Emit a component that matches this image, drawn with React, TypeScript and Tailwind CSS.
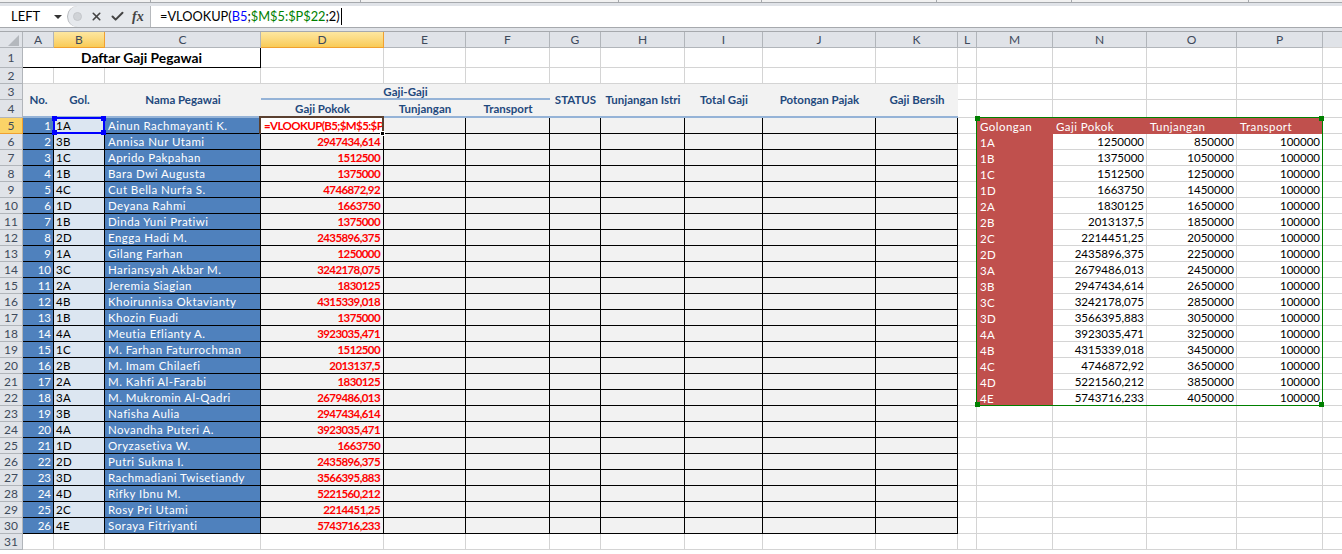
import React from "react";
import { X, Check } from "lucide-react";

const rows: [string, string, string][] = [
  ["1A", "Ainun Rachmayanti K.", ""],
  ["3B", "Annisa Nur Utami", "2947434,614"],
  ["1C", "Aprido Pakpahan", "1512500"],
  ["1B", "Bara Dwi Augusta", "1375000"],
  ["4C", "Cut Bella Nurfa S.", "4746872,92"],
  ["1D", "Deyana Rahmi", "1663750"],
  ["1B", "Dinda Yuni Pratiwi", "1375000"],
  ["2D", "Engga Hadi M.", "2435896,375"],
  ["1A", "Gilang Farhan", "1250000"],
  ["3C", "Hariansyah Akbar M.", "3242178,075"],
  ["2A", "Jeremia Siagian", "1830125"],
  ["4B", "Khoirunnisa Oktavianty", "4315339,018"],
  ["1B", "Khozin Fuadi", "1375000"],
  ["4A", "Meutia Eflianty A.", "3923035,471"],
  ["1C", "M. Farhan Faturrochman", "1512500"],
  ["2B", "M. Imam Chilaefi", "2013137,5"],
  ["2A", "M. Kahfi Al-Farabi", "1830125"],
  ["3A", "M. Mukromin Al-Qadri", "2679486,013"],
  ["3B", "Nafisha Aulia", "2947434,614"],
  ["4A", "Novandha Puteri A.", "3923035,471"],
  ["1D", "Oryzasetiva W.", "1663750"],
  ["2D", "Putri Sukma I.", "2435896,375"],
  ["3D", "Rachmadiani Twisetiandy", "3566395,883"],
  ["4D", "Rifky Ibnu M.", "5221560,212"],
  ["2C", "Rosy Pri Utami", "2214451,25"],
  ["4E", "Soraya Fitriyanti", "5743716,233"],
];

const lookup: [string, string, string, string][] = [
  ["1A", "1250000", "850000", "100000"],
  ["1B", "1375000", "1050000", "100000"],
  ["1C", "1512500", "1250000", "100000"],
  ["1D", "1663750", "1450000", "100000"],
  ["2A", "1830125", "1650000", "100000"],
  ["2B", "2013137,5", "1850000", "100000"],
  ["2C", "2214451,25", "2050000", "100000"],
  ["2D", "2435896,375", "2250000", "100000"],
  ["3A", "2679486,013", "2450000", "100000"],
  ["3B", "2947434,614", "2650000", "100000"],
  ["3C", "3242178,075", "2850000", "100000"],
  ["3D", "3566395,883", "3050000", "100000"],
  ["4A", "3923035,471", "3250000", "100000"],
  ["4B", "4315339,018", "3450000", "100000"],
  ["4C", "4746872,92", "3650000", "100000"],
  ["4D", "5221560,212", "3850000", "100000"],
  ["4E", "5743716,233", "4050000", "100000"],
];

const colLetters = ["A", "B", "C", "D", "E", "F", "G", "H", "I", "J", "K", "L", "M", "N", "O", "P"];
const grid = "border-r border-b border-[#d4d4d4]";
const hdr = "row-span-2 flex items-center justify-center border-b-2 border-[#95b3d7] bg-[#f2f2f2] font-bold text-[#1f497d] whitespace-nowrap text-[11.5px]";
const sub = "flex items-center justify-center border-b-2 border-[#95b3d7] bg-[#f2f2f2] pt-[2px] font-bold text-[#1f497d] text-[11.5px]";
const dark = "border-r border-b border-black";
const txt = "text-[11.5px] tracking-[0.45px]";
const num = "text-[11.5px]";
const redNum = "text-[11.5px] tracking-[-0.6px] font-bold text-[#ff0000]";
const red = "flex items-center bg-[#c0504d] pl-[3px] pt-[1px] text-white " + txt;

function RowHead({ n }: { n: number }) {
  return (
    <div
      className={
        n === 5
          ? "flex items-center justify-center border-r border-b border-[#f0a030] bg-[#fbd367] pt-[1px] text-[#3e4a5b]"
          : "flex items-center justify-center border-r border-b border-[#b1b5ba] bg-[#e0e3e8] pt-[1px] text-[#3e4a5b]"
      }
    >
      {n}
    </div>
  );
}

function Empty({ count }: { count: number }) {
  return (
    <>
      {Array.from({ length: count }).map((_, i) => (
        <div key={i} className={grid} />
      ))}
    </>
  );
}

function Handle({ className }: { className: string }) {
  return <div className={"absolute h-[5px] w-[5px] " + className} />;
}

export default function App() {
  return (
    <div className="h-[554px] w-[1342px] overflow-hidden bg-white font-['Lato','Liberation_Sans',sans-serif] text-[12px] leading-none text-black">
      <div className="flex h-[3px] border-b border-[#a6a9ad] bg-[#f1f1f1]">
        <div className="h-full w-[151px] border-r border-[#a6a9ad]" />
        <div className="h-full w-[210px] border-r border-[#a6a9ad]" />
        <div className="h-full w-[258px] border-r border-[#a6a9ad]" />
        <div className="h-full w-[143px] border-r border-[#a6a9ad]" />
        <div className="h-full w-[175px] border-r border-[#a6a9ad]" />
        <div className="h-full w-[135px] border-r border-[#a6a9ad]" />
        <div className="h-full w-[177px] border-r border-[#a6a9ad]" />
      </div>
      <div className="h-[3px] bg-[#e0e3e8]" />
      <div className="flex h-[22px] border-b border-[#a6a9ad] bg-white">
        <div className="flex w-[67px] items-center pl-[11px] text-[13px] text-black">
          <span className="flex-1">LEFT</span>
          <svg width="8" height="4" viewBox="0 0 8 4" className="mr-[5px]">
            <path d="M0 0h8L4 4z" fill="#333" />
          </svg>
        </div>
        <div className="flex w-[83px] items-center rounded-l-[11px] border-l border-[#b6b9bd] bg-[#e6e9ed]">
          <div className="ml-[5px] h-[9px] w-[9px] rounded-full border border-[#c4c7cb] bg-[#d0d3d7]" />
          <X size={13} strokeWidth={3} className="ml-[8px] text-[#444]" />
          <Check size={15} strokeWidth={3.2} className="ml-[7px] text-[#444]" />
          <span className="ml-[7px] font-['Liberation_Serif',serif] text-[14px] font-bold italic text-[#444]">fx</span>
        </div>
        <div className="flex flex-1 items-center border-l border-[#b6b9bd] pl-[9px] text-[12.8px] whitespace-nowrap">
          <span>=VLOOKUP(</span>
          <span className="text-[#0000ff]">B5</span>
          <span>;</span>
          <span className="text-[#008000]">$M$5:$P$22</span>
          <span>;2)</span>
          <span className="ml-[1px] h-[17px] w-px bg-black" />
        </div>
      </div>
      <div className="box-content h-[3px] border-b border-[#a6a9ad] bg-[#e0e3e8]" />

      <div className="relative grid grid-cols-[23px_31px_51px_156px_123px_82px_84px_51px_84px_78px_113px_82px_19px_76px_94px_90px_86px_20px] grid-rows-[16px_20px_16px_16px_18px_16px_repeat(26,16px)]">
        <div className="relative border-r border-b border-[#b1b5ba] bg-[#e0e3e8]">
          <svg width="11" height="11" viewBox="0 0 11 11" className="absolute right-[3px] bottom-[1px]">
            <path d="M11 0v11H0z" fill="#b4b8bd" />
          </svg>
        </div>
        {colLetters.map((c) => (
          <div
            key={c}
            className={
              c === "B" || c === "D"
                ? "flex items-center justify-center border-r border-b border-[#f0a030] bg-gradient-to-b from-[#fde7a0] to-[#f9cb55] text-[#3e4a5b]"
                : "flex items-center justify-center border-r border-b border-[#b1b5ba] bg-[#e0e3e8] text-[#3e4a5b]"
            }
          >
            {c}
          </div>
        ))}
        <div className="border-b border-[#d4d4d4] bg-[#e0e3e8]" />

        {/* Row 1 */}
        <RowHead n={1} />
        <div className="col-span-3 flex items-center justify-center border-r border-b border-black pt-[1px] text-[13.8px] font-bold">
          Daftar Gaji Pegawai
        </div>
        <Empty count={14} />

        {/* Row 2 */}
        <RowHead n={2} />
        <Empty count={17} />

        {/* Row 3 */}
        <RowHead n={3} />
        <div className={hdr}>No.</div>
        <div className={hdr}>Gol.</div>
        <div className={hdr}>Nama Pegawai</div>
        <div className="col-span-3 flex items-center justify-center border-b-2 border-[#95b3d7] bg-[#f2f2f2] pt-[1px] text-[11.5px] font-bold text-[#1f497d]">
          Gaji-Gaji
        </div>
        <div className={hdr}>STATUS</div>
        <div className={hdr}>Tunjangan Istri</div>
        <div className={hdr}>Total Gaji</div>
        <div className={hdr}>Potongan Pajak</div>
        <div className={hdr}>Gaji Bersih</div>
        <Empty count={6} />

        {/* Row 4 */}
        <RowHead n={4} />
        <div className={sub}>Gaji Pokok</div>
        <div className={sub}>Tunjangan</div>
        <div className={sub}>Transport</div>
        <Empty count={6} />

        {/* Rows 5 to 30 */}
        {rows.map((r, i) => {
          const n = i + 5;
          const look = lookup[i - 1];
          const isHead = i === 0;
          return (
            <React.Fragment key={n}>
              <RowHead n={n} />
              <div className={dark + " flex items-center justify-end bg-[#4f81bd] pr-[2px] pt-[1px] text-white " + num}>{i + 1}</div>
              <div className={dark + " flex items-center bg-[#dce6f1] pl-[2px] pt-[1px] " + txt}>{r[0]}</div>
              <div className={dark + " flex items-center bg-[#4f81bd] pl-[3px] pt-[1px] text-white whitespace-nowrap " + txt}>{r[1]}</div>
              {isHead ? (
                <div className={"flex items-center overflow-hidden border-r border-b border-black bg-white pl-[3px] pt-[1px] whitespace-nowrap " + redNum}>
                  =VLOOKUP(B5;$M$5:$P$22;2)
                </div>
              ) : (
                <div className={dark + " flex items-center justify-end bg-[#f2f2f2] pr-[3px] pt-[1px] " + redNum}>{r[2]}</div>
              )}
              {Array.from({ length: 7 }).map((_, k) => (
                <div key={k} className={dark + " bg-[#f2f2f2]"} />
              ))}
              <div className={grid} />
              {isHead ? (
                <>
                  <div className={red}>Golongan</div>
                  <div className={red}>Gaji Pokok</div>
                  <div className={red}>Tunjangan</div>
                  <div className={red}>Transport</div>
                </>
              ) : look ? (
                <>
                  <div className={red}>{look[0]}</div>
                  <div className={grid + " flex items-center justify-end pr-[2px] pt-[1px] " + num}>{look[1]}</div>
                  <div className={grid + " flex items-center justify-end pr-[2px] pt-[1px] " + num}>{look[2]}</div>
                  <div className={grid + " flex items-center justify-end pr-[2px] pt-[1px] " + num}>{look[3]}</div>
                </>
              ) : (
                <Empty count={4} />
              )}
              <div className={grid} />
            </React.Fragment>
          );
        })}

        {/* Row 31 */}
        <RowHead n={31} />
        <Empty count={17} />

        {/* B5 selection */}
        <div className="absolute top-[85px] left-[53px] h-[17px] w-[52px] border-2 border-[#0000ff]">
          <Handle className="-top-[3px] -left-[3px] bg-[#0000ff]" />
          <Handle className="-top-[3px] -right-[3px] bg-[#0000ff]" />
          <Handle className="-bottom-[3px] -left-[3px] bg-[#0000ff]" />
          <Handle className="-right-[3px] -bottom-[3px] bg-[#0000ff]" />
        </div>
        {/* D5 active cell */}
        <div className="absolute top-[84px] left-[259px] h-[18px] w-[125px] border-2 border-b-0 border-[#5a4030]">
          <div className="absolute -right-[3px] -bottom-[2px] h-[5px] w-[5px] border border-white bg-black" />
        </div>
        {/* M5:P22 lookup range */}
        <div className="absolute top-[85px] left-[976px] h-[289px] w-[347px] border border-[#008000]">
          <Handle className="-top-[2px] -left-[2px] bg-[#008000]" />
          <Handle className="-top-[2px] -right-[2px] bg-[#008000]" />
          <Handle className="-bottom-[2px] -left-[2px] bg-[#008000]" />
          <Handle className="-right-[2px] -bottom-[2px] bg-[#008000]" />
        </div>
      </div>
    </div>
  );
}
